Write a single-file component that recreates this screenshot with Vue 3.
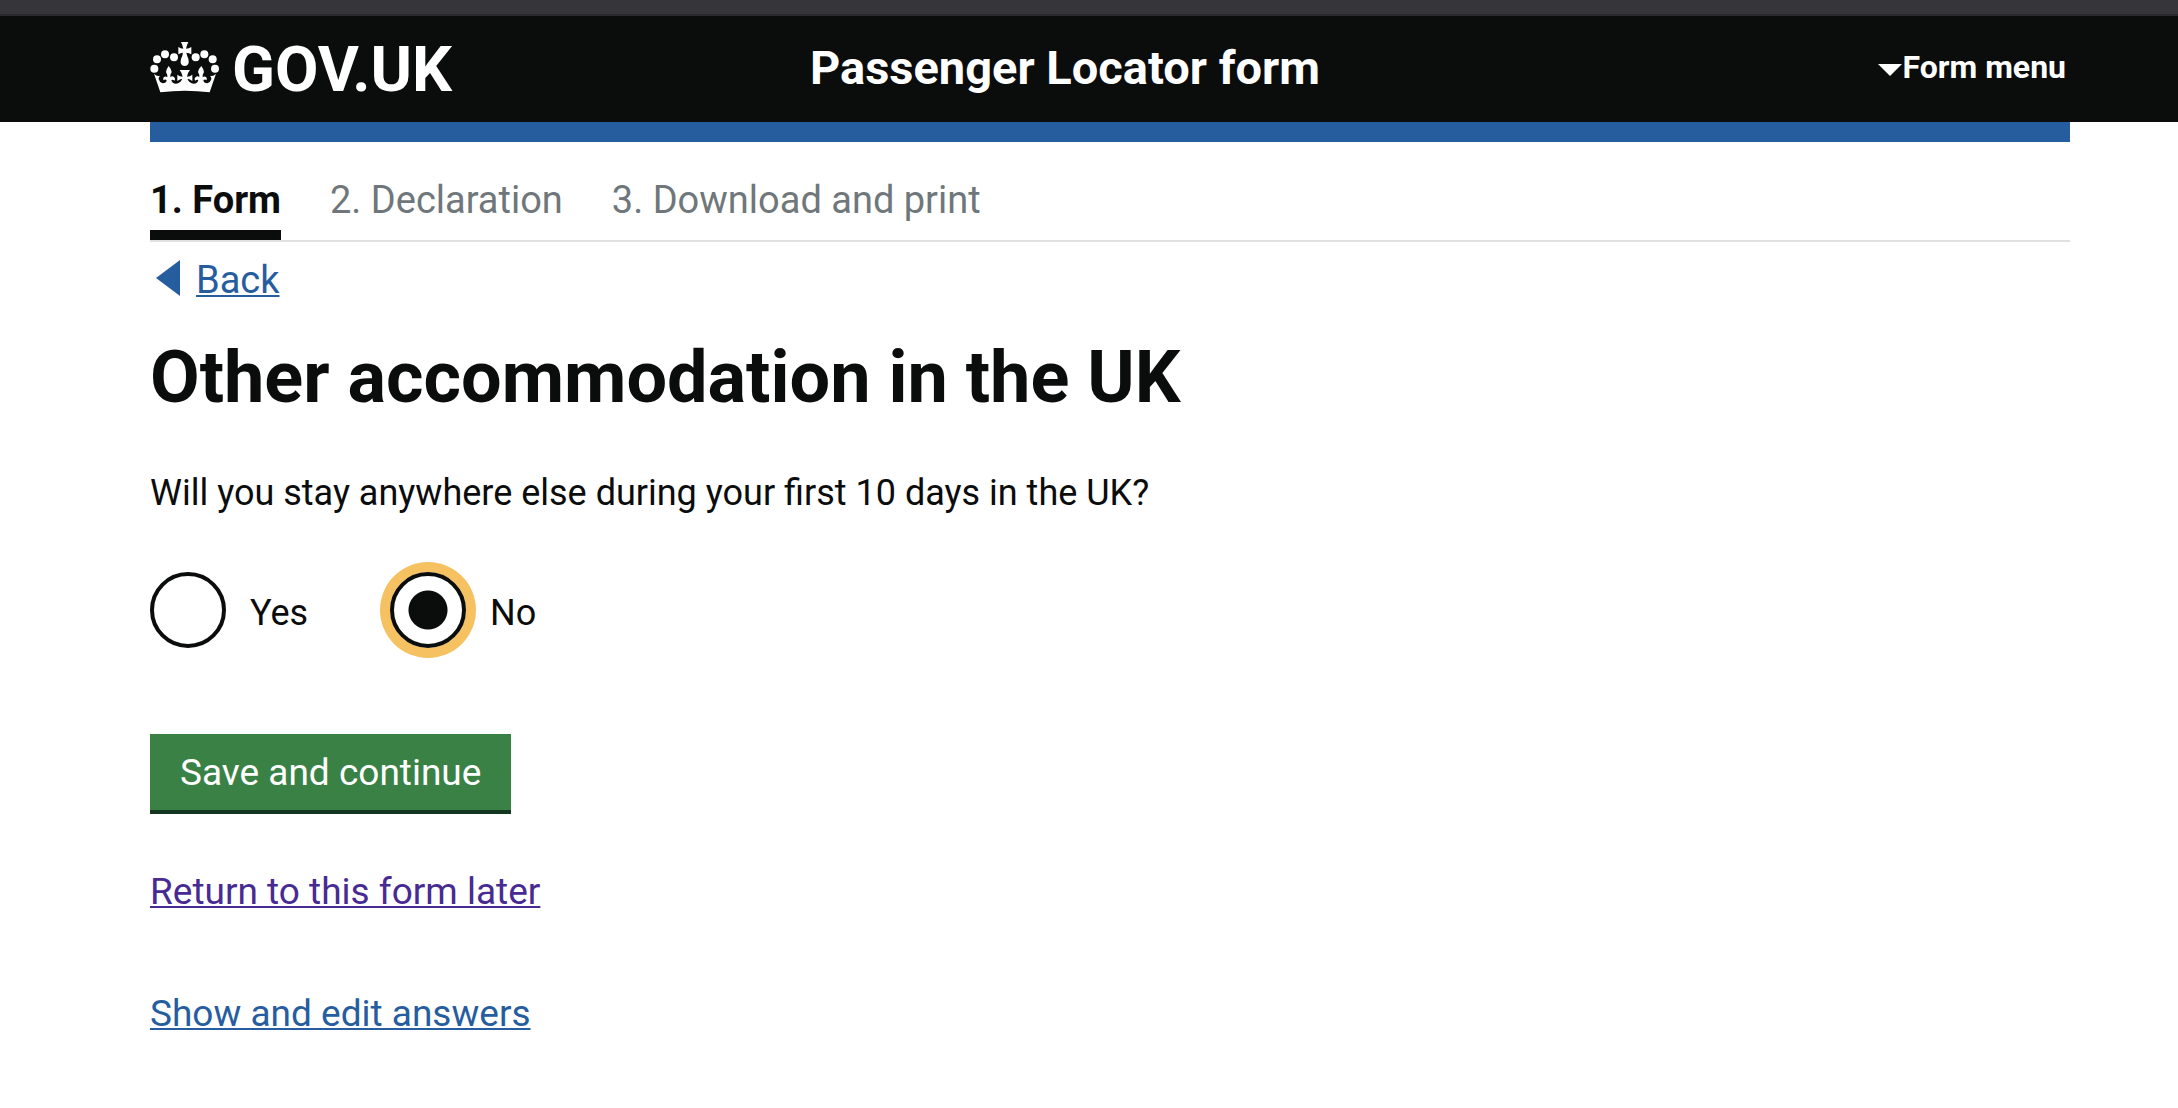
<script setup>
import { ref } from 'vue'

const steps = ['1. Form', '2. Declaration', '3. Download and print']
const current = ref(0)
const answer = ref('no')
const options = [
  { value: 'yes', label: 'Yes' },
  { value: 'no', label: 'No' },
]
</script>

<template>
  <div class="page">
    <header class="header">
      <div class="header-inner">
        <a class="logo" href="#">
          <svg class="crown" viewBox="30 30 210 186" aria-hidden="true">
            <g fill="#fff">
              <circle cx="43" cy="116" r="12" />
              <circle cx="51" cy="88" r="12" />
              <circle cx="75" cy="73" r="12" />
              <circle cx="102" cy="82" r="12" />
              <circle cx="167" cy="82" r="12" />
              <circle cx="193" cy="73" r="12" />
              <circle cx="218" cy="88" r="12" />
              <circle cx="225" cy="116" r="12" />
              <path d="M123 36H145Q140 46 138 56Q147 56 154 51V73Q147 69 139 68Q141 77 145 86Q150 107 134 108Q118 107 123 86Q128 77 129 68Q122 69 115 73V51Q122 56 130 56Q128 46 123 36Z" />
              <path d="M42 131Q50 140 60 137Q55 142 56 148Q59 158 68 160Q79 160 80 150Q74 146 71 151Q67 143 74 140Q79 138 82 142Q83 134 78 126Q79 117 86 108Q94 117 95 126Q90 134 91 142Q95 137 101 140Q108 145 103 152Q99 147 94 150Q96 161 108 161Q121 160 127 146Q119 147 112 153V134Q119 140 128 140Q126 129 119 120H150Q142 129 141 140Q150 140 157 134V153Q150 147 142 146Q148 160 161 161Q173 161 175 150Q170 147 166 152Q161 145 168 140Q174 137 178 142Q179 134 174 126Q175 117 184 108Q191 117 192 126Q187 134 188 142Q191 138 196 140Q203 143 199 151Q196 146 190 150Q191 160 202 160Q211 158 214 148Q215 142 210 137Q220 140 228 131L209 187Q134 178 61 187Z" />
            </g>
          </svg>
          <span>GOV.UK</span>
        </a>
        <div class="header-content">
          <a class="service" href="#">Passenger Locator form</a>
          <button class="menu" type="button">
            <svg class="caret" viewBox="0 0 24 12" aria-hidden="true"><path d="M0 0H24L12 12Z" fill="#fff" /></svg>Form menu
          </button>
        </div>
      </div>
    </header>

    <div class="container">
      <div class="bar"></div>
      <nav class="steps" aria-label="Progress">
        <span v-for="(step, i) in steps" :key="step" class="step" :class="{ active: i === current }">{{ step }}</span>
      </nav>

      <main>
        <div class="back">
          <svg class="arrow" viewBox="0 0 24 36" aria-hidden="true"><path d="M24 0V36L0 18Z" fill="#265d9f" /></svg>
          <a href="#">Back</a>
        </div>
        <h1>Other accommodation in the UK</h1>
        <form @submit.prevent>
          <p id="question" class="question">Will you stay anywhere else during your first 10 days in the UK?</p>
          <div class="radios" role="radiogroup" aria-labelledby="question">
            <label v-for="o in options" :key="o.value" class="option">
              <input v-model="answer" type="radio" name="stay" :value="o.value" />
              <span>{{ o.label }}</span>
            </label>
          </div>
          <button class="save" type="submit">Save and continue</button>
        </form>
        <p class="link"><a class="visited" href="#">Return to this form later</a></p>
        <p class="link"><a href="#">Show and edit answers</a></p>
      </main>
    </div>
  </div>
</template>

<style>
body {
  margin: 0;
  background: #fff;
}
</style>

<style scoped>
.page {
  font-family: Roboto, "Liberation Sans", sans-serif;
  font-size: 38px;
  line-height: 50px;
  color: #0b0c0c;
}
.header {
  background: #0b0c0c;
  border-top: 14px solid #36363a;
  box-shadow: inset 0 2px #292a2b;
  color: #fff;
}
.header-inner {
  display: grid;
  grid-template-columns: 1fr 2fr;
  align-items: center;
  min-height: 108px;
  padding: 0 108px 0 150px;
}
.logo {
  display: flex;
  align-items: center;
  gap: 12px;
  padding-top: 4px;
  color: #fff;
  font-size: 63px;
  font-weight: 700;
  line-height: 64px;
  text-decoration: none;
}
.crown {
  width: 70px;
  height: 62px;
  padding-top: 2px;
}
.header-content {
  display: flex;
  align-items: center;
  justify-content: space-between;
  padding: 0 4px 0 20px;
}
.service {
  color: #fff;
  font-size: 47px;
  font-weight: 700;
  line-height: 60px;
  text-decoration: none;
}
.menu {
  display: flex;
  align-items: center;
  padding: 0 0 2px;
  border: 0;
  background: none;
  color: #fff;
  font: 700 32px/40px Roboto, "Liberation Sans", sans-serif;
}
.caret {
  width: 24px;
  height: 12px;
  padding-top: 6px;
}
.container {
  padding: 0 108px 0 150px;
}
.bar {
  height: 20px;
  background: #265d9f;
}
.steps {
  display: flex;
  gap: 49px;
  padding-top: 33px;
  border-bottom: 2px solid #dfe0e0;
}
.step {
  padding-bottom: 5px;
  border-bottom: 10px solid transparent;
  color: #6f777b;
}
.step.active {
  border-color: #0b0c0c;
  color: #0b0c0c;
  font-weight: 700;
}
.back {
  display: flex;
  align-items: center;
  gap: 16px;
  padding: 13px 0 0 6px;
}
.arrow {
  width: 24px;
  height: 36px;
  padding-bottom: 4px;
}
a {
  color: #265d9f;
  text-decoration-thickness: 2px;
  text-underline-offset: 2px;
  text-decoration-skip-ink: none;
}
h1 {
  margin: 33px 0 0;
  font-size: 72px;
  line-height: 80px;
  font-weight: 700;
}
.question {
  margin: 50px 0 0;
  font-size: 36px;
}
.radios {
  display: flex;
  margin-top: 54px;
  font-size: 36px;
}
.option {
  display: flex;
  align-items: center;
  gap: 24px;
  width: 240px;
}
.option span {
  padding-top: 6px;
}
.option input {
  appearance: none;
  width: 76px;
  height: 76px;
  margin: 0;
  border: 4px solid #0b0c0c;
  border-radius: 50%;
  background: #fff;
}
.option input:checked {
  background: radial-gradient(circle, #0b0c0c 19px, #fff 20px);
  box-shadow: 0 0 0 10px #f6c161;
}
.save {
  display: block;
  margin-top: 86px;
  padding: 14px 30px 12px;
  border: 0;
  border-bottom: 4px solid #12361f;
  background: #3a8145;
  color: #fff;
  font: 400 37px/50px Roboto, "Liberation Sans", sans-serif;
}
.link {
  margin: 53px 0 72px;
  font-size: 37px;
}
.link + .link {
  margin: 0;
}
.visited {
  color: #482b92;
}
</style>
